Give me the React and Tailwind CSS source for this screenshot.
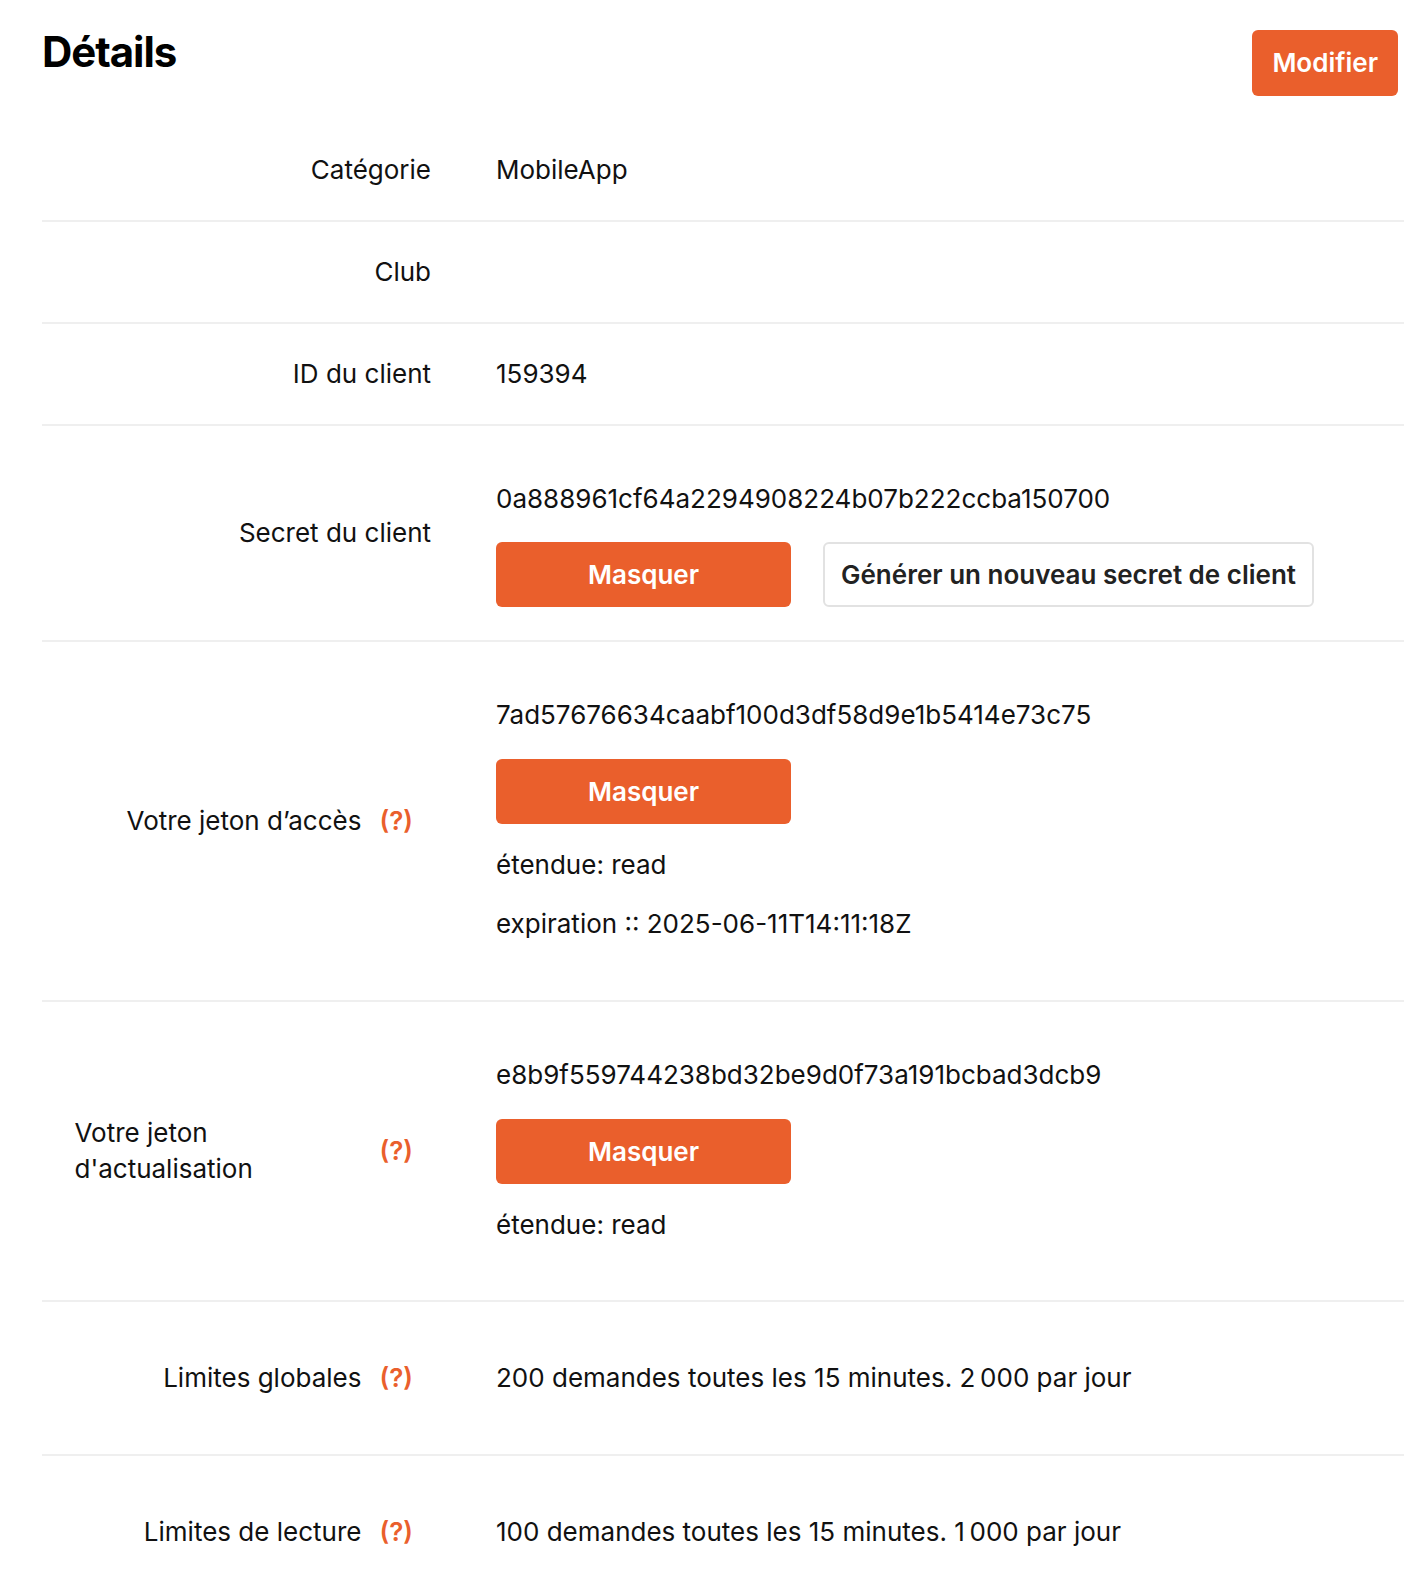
import React from 'react';

const orangeBtn =
  'h-[65px] w-[295px] rounded-[6px] bg-[#ea5f2c] text-[26px] font-semibold text-white leading-none';

function Help() {
  return <span className="ml-[18px] mr-[18px] shrink-0 font-semibold text-[#ea5f2c]">(?)</span>;
}

function Row({ label, help, pad = 'py-8', children }) {
  return (
    <div className="flex border-b-2 border-[#efefef]">
      <div className="flex w-[389px] shrink-0 items-center justify-end">
        <span className="max-w-[287px] text-left">{label}</span>
        {help && <Help />}
      </div>
      <div className={`flex flex-col pl-[65px] ${pad}`}>{children}</div>
    </div>
  );
}

export default function App() {
  return (
    <div
      className="min-h-screen bg-white pt-[27px] pl-[42px] text-[26px] leading-[36px] text-[#111]"
      style={{ fontFamily: 'Inter, "Noto Sans", sans-serif' }}
    >
      <header className="flex items-start justify-between">
        <h1 className="text-[42px] font-bold leading-[50px] tracking-tight text-black">Détails</h1>
        <button className="mt-[3px] mr-[6px] h-[66px] rounded-[6px] bg-[#ea5f2c] px-[20px] text-[26px] font-semibold text-white">
          Modifier
        </button>
      </header>

      <div className="mt-[24px]">
        <Row label="Catégorie">
          <p>MobileApp</p>
        </Row>
        <Row label="Club">
          <p>&nbsp;</p>
        </Row>
        <Row label="ID du client">
          <p>159394</p>
        </Row>

        <div className="flex border-b-2 border-[#efefef]">
          <div className="flex w-[389px] shrink-0 items-center justify-end">
            <span>Secret du client</span>
          </div>
          <div className="flex flex-col pt-[55px] pb-[33px] pl-[65px]">
            <p>0a888961cf64a2294908224b07b222ccba150700</p>
            <div className="mt-[25px] flex gap-8">
              <button className={orangeBtn}>Masquer</button>
              <button className="h-[65px] rounded-[6px] border-2 border-[#e2e2e2] px-[16px] text-[26px] font-semibold text-[#222]">
                Générer un nouveau secret de client
              </button>
            </div>
          </div>
        </div>

        <Row label="Votre jeton d’accès" help pad="pt-[55px] pb-[58px]">
          <p>7ad57676634caabf100d3df58d9e1b5414e73c75</p>
          <button className={`${orangeBtn} mt-[26px]`}>Masquer</button>
          <p className="mt-[23px]">étendue: read</p>
          <p className="mt-[23px]">expiration :: 2025-06-11T14:11:18Z</p>
        </Row>

        <Row label="Votre jeton d'actualisation" help pad="pt-[55px] pb-[57px]">
          <p>e8b9f559744238bd32be9d0f73a191bcbad3dcb9</p>
          <button className={`${orangeBtn} mt-[26px]`}>Masquer</button>
          <p className="mt-[23px]">étendue: read</p>
        </Row>

        <Row label="Limites globales" help pad="py-[58px]">
          <p>200 demandes toutes les 15 minutes. 2{'\u202f'}000 par jour</p>
        </Row>

        <Row label="Limites de lecture" help pad="py-[58px]">
          <p>100 demandes toutes les 15 minutes. 1{'\u202f'}000 par jour</p>
        </Row>
      </div>
    </div>
  );
}
